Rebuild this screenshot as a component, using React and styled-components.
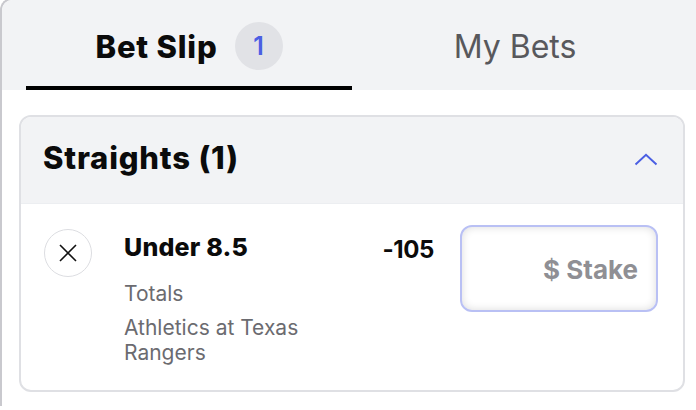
import React from 'react';
import styled, { createGlobalStyle } from 'styled-components';

const GlobalStyle = createGlobalStyle`
  html, body {
    margin: 0;
    padding: 0;
    background: #ffffff;
    overflow: hidden;
  }
  body {
    font-family: Inter, "Liberation Sans", Arial, sans-serif;
    color: #111111;
  }
`;

const Panel = styled.div`
  width: 700px;
  margin-top: -2px;
  border-left: 2px solid #c9c9ce;
  border-top: 2px solid #c9c9ce;
  border-top-left-radius: 12px;
  background: #ffffff;
  overflow: hidden;
`;

const TabBar = styled.div`
  display: flex;
  padding: 0 24px;
  background: #f2f3f5;
`;

const Tab = styled.div`
  flex: 1;
  height: 80px;
  padding-top: 6px;
  display: flex;
  align-items: center;
  justify-content: center;
  gap: 17px;
  border-bottom: 4px solid ${p => (p.$active ? '#000000' : 'transparent')};
  font-size: ${p => (p.$active ? 31 : 32)}px;
  font-weight: ${p => (p.$active ? 800 : 400)};
  color: ${p => (p.$active ? '#0b0b0b' : '#58585c')};
  letter-spacing: ${p => (p.$active ? 0.8 : 0)}px;
`;

const Badge = styled.span`
  width: 48px;
  height: 48px;
  border-radius: 50%;
  background: #e1e2e6;
  color: #4b5fe3;
  font-size: 25px;
  font-weight: 600;
  letter-spacing: 0;
  display: flex;
  align-items: center;
  justify-content: center;
`;

const Content = styled.div`
  padding: 25px 17px 14px;
`;

const Card = styled.div`
  border: 2px solid #dfe0e4;
  border-radius: 12px;
  overflow: hidden;
`;

const CardHeader = styled.div`
  height: 80px;
  padding: 0 25px 6px 22px;
  display: flex;
  align-items: center;
  justify-content: space-between;
  background: #f2f3f5;
  border-bottom: 1px solid #eceef1;
`;

const CardTitle = styled.h2`
  margin: 0;
  font-size: 31px;
  font-weight: 800;
  color: #0b0b0b;
  letter-spacing: 0.8px;
`;

const Chevron = styled.svg`
  width: 24px;
  height: 13px;
  margin-top: 5px;
`;

const BetRow = styled.div`
  display: flex;
  align-items: flex-start;
  padding: 21px 25px 25px 23px;
`;

const RemoveButton = styled.button`
  flex: none;
  width: 48px;
  height: 48px;
  margin-top: 4px;
  border-radius: 50%;
  border: 1.5px solid #dcdde1;
  background: #ffffff;
  display: flex;
  align-items: center;
  justify-content: center;
  padding: 0;
`;

const BetInfo = styled.div`
  flex: 1;
  min-width: 0;
  margin: 7px 20px 0 32px;
`;

const Selection = styled.div`
  font-size: 25px;
  line-height: 30px;
  font-weight: 800;
  color: #0b0b0b;
  letter-spacing: 0.2px;
`;

const Meta = styled.div`
  font-size: 21px;
  line-height: 25px;
  color: #6b6b70;
  margin-top: ${p => p.$gap}px;
  max-width: 232px;
`;

const Odds = styled.div`
  flex: none;
  margin-top: 10px;
  font-size: 24px;
  line-height: 30px;
  font-weight: 700;
  color: #0b0b0b;
  letter-spacing: -0.4px;
`;

const StakeInput = styled.input`
  flex: none;
  box-sizing: border-box;
  width: 198px;
  height: 87px;
  margin-left: 26px;
  padding: 2px 18px 0 0;
  border: 2px solid #b9c0f4;
  border-radius: 12px;
  background: #ffffff;
  box-shadow: inset 0 0 9px rgba(0, 0, 0, 0.14);
  text-align: right;
  font-family: Inter, "Liberation Sans", Arial, sans-serif;
  font-size: 26px;
  font-weight: 700;
  color: #111111;
  outline: none;

  &::placeholder {
    color: #8f8f94;
    opacity: 1;
  }
`;

export default function App() {
  return (
    <>
      <GlobalStyle />
      <Panel>
        <TabBar>
          <Tab $active>
            Bet Slip
            <Badge>1</Badge>
          </Tab>
          <Tab>My Bets</Tab>
        </TabBar>
        <Content>
          <Card>
            <CardHeader>
              <CardTitle>Straights (1)</CardTitle>
              <Chevron viewBox="0 0 24 13" fill="none">
                <path d="M1.5 11.5 L12 1.8 L22.5 11.5" stroke="#4b5fe3" strokeWidth="2" />
              </Chevron>
            </CardHeader>
            <BetRow>
              <RemoveButton aria-label="Remove">
                <svg width="20" height="20" viewBox="0 0 20 20" fill="none">
                  <path d="M2 2 L18 18 M18 2 L2 18" stroke="#111" strokeWidth="1.6" />
                </svg>
              </RemoveButton>
              <BetInfo>
                <Selection>Under 8.5</Selection>
                <Meta $gap={19}>Totals</Meta>
                <Meta $gap={9}>Athletics at Texas Rangers</Meta>
              </BetInfo>
              <Odds>-105</Odds>
              <StakeInput placeholder="$ Stake" />
            </BetRow>
          </Card>
        </Content>
      </Panel>
    </>
  );
}
